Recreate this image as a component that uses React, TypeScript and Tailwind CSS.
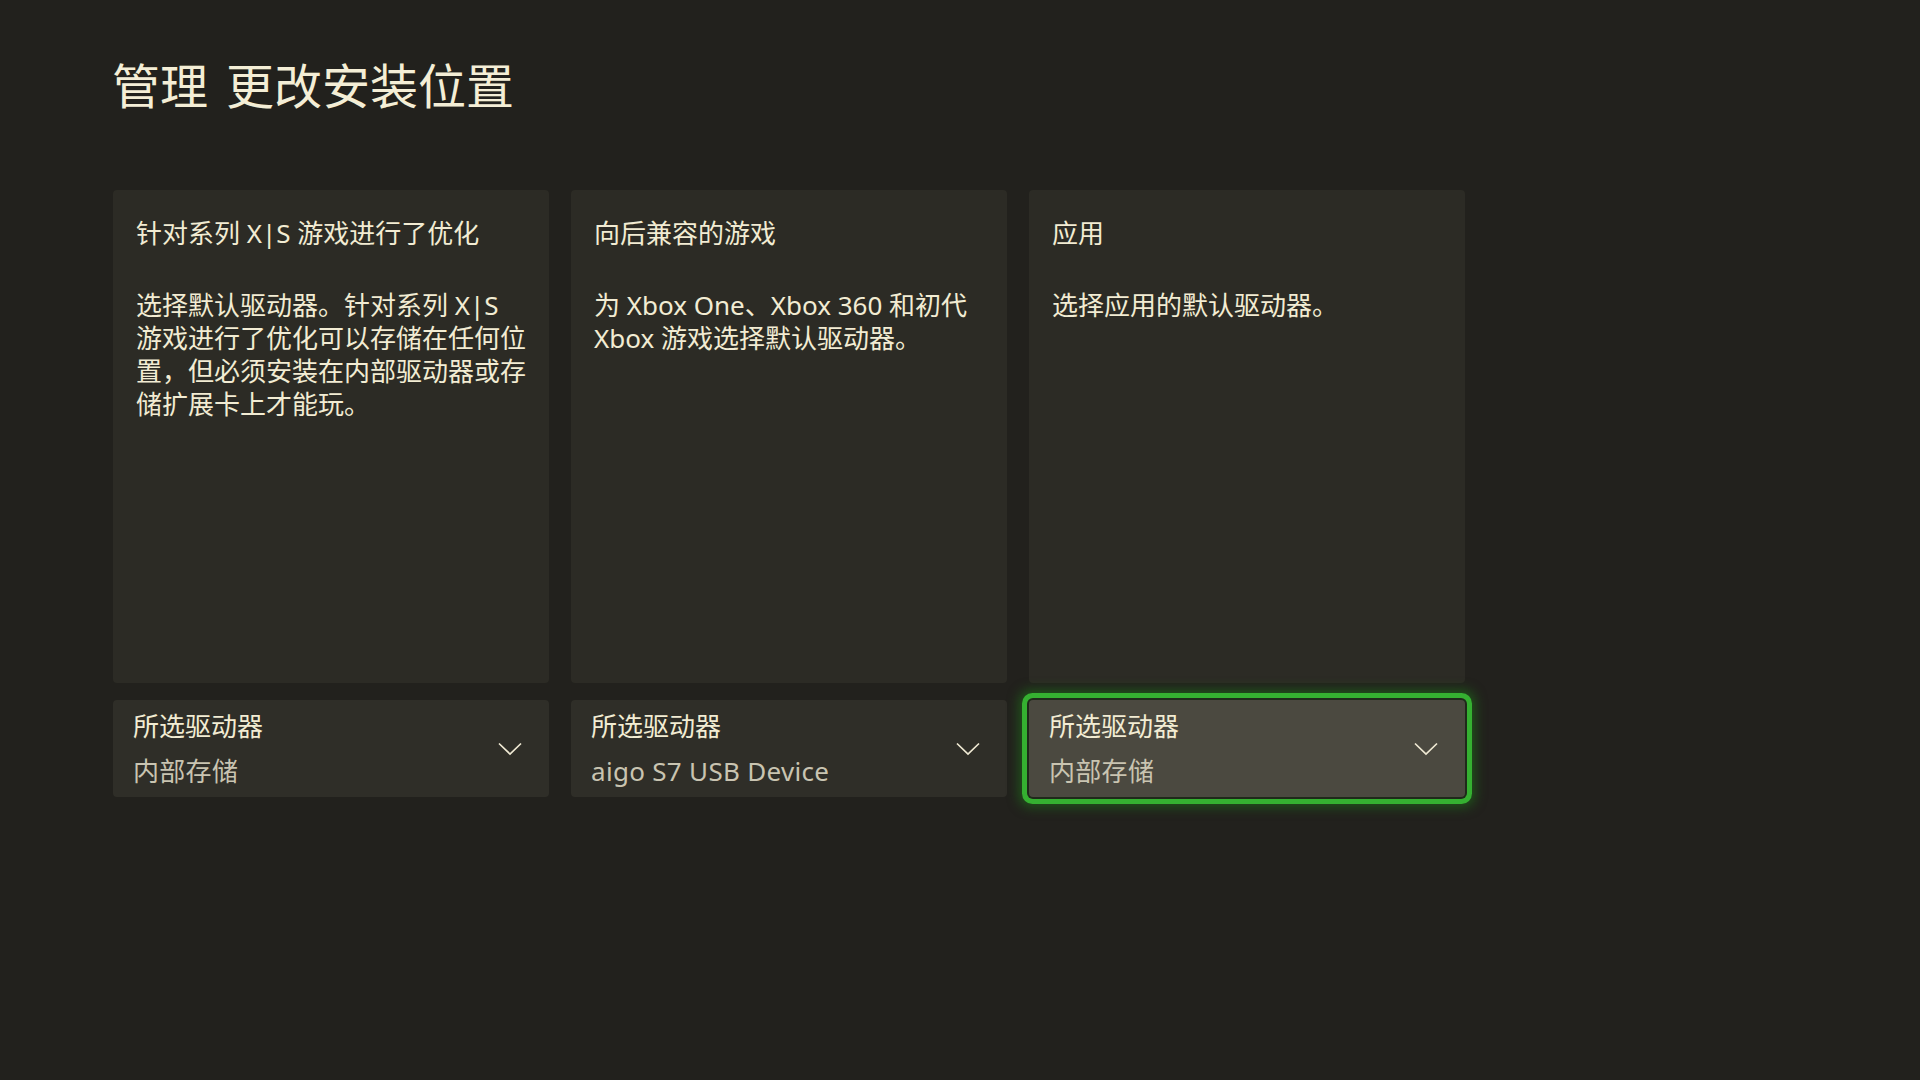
import React from "react";

const FONT = { fontFamily: '"Noto Sans", "Noto Sans CJK SC", sans-serif' };

function Chevron() {
  return (
    <svg width="24" height="14" viewBox="0 0 24 14" fill="none" className="shrink-0">
      <polyline points="1,1.5 12,12 23,1.5" stroke="#efe9d3" strokeWidth="1.7" fill="none" />
    </svg>
  );
}

function Card({ title, lines }: { title: string; lines: string[] }) {
  return (
    <div className="h-[493px] rounded-[4px] bg-[#2c2b25] pl-[23px] pr-[8px] pt-[27px]">
      <div className="text-[26px] leading-[33px] text-[#f2ecd3] whitespace-nowrap">{title}</div>
      <div className="mt-[39px] text-[26px] leading-[33px] text-[#f2ecd3]">
        {lines.map((l, i) => (
          <div key={i} className="whitespace-nowrap">{l}</div>
        ))}
      </div>
    </div>
  );
}

function Dropdown({ value, focused }: { value: string; focused?: boolean }) {
  return (
    <div
      className={
        "mt-[17px] flex h-[97px] items-center justify-between rounded-[4px] pl-[20px] pr-[27px] " +
        (focused
          ? "bg-[#4b4940] shadow-[0_0_0_2px_#1f2a1a,0_0_0_7px_#35b031,0_0_12px_10px_rgba(30,120,25,0.6)]"
          : "bg-[#2f2e28]")
      }
    >
      <div className="flex flex-col pt-[1px]">
        <div className="text-[26px] leading-[33px] text-[#f2ecd3]">所选驱动器</div>
        <div className="mt-[12px] text-[26px] leading-[33px] tracking-[0.3px] text-[#c9c4b1]">{value}</div>
      </div>
      <Chevron />
    </div>
  );
}

export default function App() {
  return (
    <div className="min-h-screen w-full bg-[#22211d] pl-[112px] pt-[58px]" style={FONT}>
      <h1 className="flex text-[48px] font-normal leading-[56px] text-[#f4eed6]">
        <span>管理</span>
        <span className="ml-[18px]">更改安装位置</span>
      </h1>
      <div className="mt-[76px] grid grid-cols-[436px_436px_436px] gap-x-[22px] pl-[1px]">
        <div className="flex flex-col">
          <Card
            title="针对系列 X|S 游戏进行了优化"
            lines={[
              "选择默认驱动器。针对系列 X|S",
              "游戏进行了优化可以存储在任何位",
              "置，但必须安装在内部驱动器或存",
              "储扩展卡上才能玩。",
            ]}
          />
          <Dropdown value="内部存储" />
        </div>
        <div className="flex flex-col">
          <Card
            title="向后兼容的游戏"
            lines={["为 Xbox One、Xbox 360 和初代", "Xbox 游戏选择默认驱动器。"]}
          />
          <Dropdown value="aigo S7 USB Device" />
        </div>
        <div className="flex flex-col">
          <Card title="应用" lines={["选择应用的默认驱动器。"]} />
          <Dropdown value="内部存储" focused />
        </div>
      </div>
    </div>
  );
}
